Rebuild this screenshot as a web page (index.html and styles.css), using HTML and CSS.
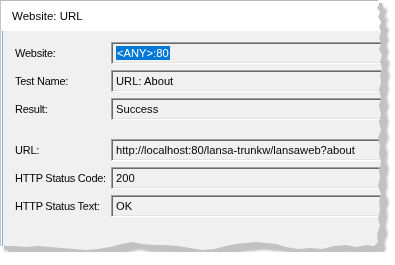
FILE: index.html
```html
<!DOCTYPE html>
<html lang="en">
<head>
    <meta charset="UTF-8">
    <title>Website: URL</title>
    <link rel="stylesheet" href="styles.css">
</head>
<body>

<div class="paper">
    <div class="dialog">
        <div class="title">Website: URL</div>
        <div class="form">
            <div class="row">
                <span class="label">Website:</span>
                <div class="field"><span class="selected">&lt;ANY&gt;:80</span></div>
            </div>
            <div class="row">
                <span class="label">Test Name:</span>
                <div class="field">URL: About</div>
            </div>
            <div class="row">
                <span class="label">Result:</span>
                <div class="field">Success</div>
            </div>
            <div class="row spaced">
                <span class="label">URL:</span>
                <div class="field">http://localhost:80/lansa-trunkw/lansaweb?about</div>
            </div>
            <div class="row">
                <span class="label">HTTP Status Code:</span>
                <div class="field">200</div>
            </div>
            <div class="row">
                <span class="label">HTTP Status Text:</span>
                <div class="field">OK</div>
            </div>
        </div>
    </div>
</div>

</body>
</html>
```

FILE: styles.css
```css
body {
    margin: 0;
    padding: 0;
    background-color: white;
    font-family: "Liberation Sans", Arial, sans-serif;
    font-size: 11px;
    color: #000;
}
/* torn paper edge: the shadow follows the clipped shape */
.paper {
    width: 384px;
    filter: drop-shadow(4px 3px 0 #c2c2c2) drop-shadow(4px 5px 1px #c2c2c2);
}
.dialog {
    width: 384px;
    height: 252px;
    box-sizing: border-box;
    background-color: #F0F0F0;
    border-top: 1px solid #B9B9B9;
    border-left: 1px solid #C4C4C4;
    clip-path: polygon(0 0, 378px 0, 379px 4px, 377px 8px, 380px 12px, 378px 17px, 381px 22px, 379px 27px,
        381px 32px, 379px 38px, 381px 44px, 379px 50px, 382px 55px, 380px 62px, 382px 68px, 380px 75px,
        381px 82px, 379px 90px, 381px 98px, 379px 106px, 381px 114px, 379px 122px, 381px 130px,
        378px 138px, 380px 146px, 379px 154px, 381px 162px, 379px 170px, 380px 178px, 378px 186px,
        381px 194px, 379px 202px, 380px 210px, 378px 218px, 380px 226px, 377px 234px, 378px 242px,
        374px 246px, 366px 245px, 356px 247px, 346px 245px, 334px 246px, 322px 249px, 310px 248px,
        298px 249px, 286px 247px, 276px 244px, 266px 243px, 256px 242px, 246px 243px, 236px 244px,
        226px 246px, 214px 249px, 202px 250px, 190px 248px, 178px 246px, 166px 245px, 154px 245px,
        142px 244px, 132px 242px, 122px 244px, 110px 247px, 98px 249px, 86px 250px, 74px 249px,
        62px 248px, 50px 247px, 38px 246px, 26px 247px, 14px 246px, 0 246px);
}
.title {
    height: 30px;
    line-height: 30px;
    padding-left: 11px;
    background-color: white;
    font-size: 11.5px;
}
.form {
    padding: 11px 0 0 14px;
    display: grid;
    align-content: start;
    row-gap: 6px;
    height: 221px;
    box-sizing: border-box;
    box-shadow: inset 1px 0 #FFFFFF, inset 2px 0 #86AEDB;
}
.row {
    display: grid;
    grid-template-columns: 96px 1fr;
    align-items: center;
    height: 22px;
}
.row.spaced {
    margin-top: 13px;
}
.label {
    white-space: nowrap;
    letter-spacing: -0.25px;
}
.field {
    height: 22px;
    box-sizing: border-box;
    padding-left: 4px;
    font-size: 11.2px;
    line-height: 20px;
    white-space: nowrap;
    overflow: hidden;
    border-top: 1px solid #A0A0A0;
    border-left: 1px solid #A0A0A0;
    border-bottom: 1px solid #FFFFFF;
    border-right: 1px solid #FFFFFF;
    box-shadow: inset 1px 1px #696969, inset -1px -1px #E3E3E3;
}
.selected {
    background-color: #0078D7;
    color: white;
    padding: 1px 1px;
}
```
